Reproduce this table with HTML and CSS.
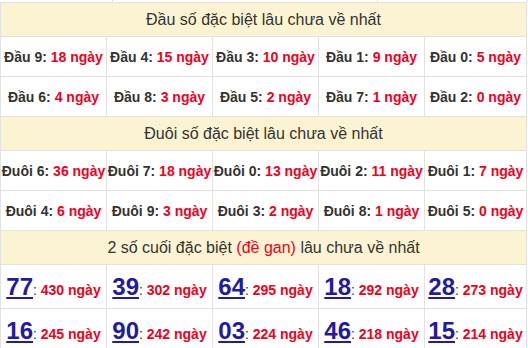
FILE: index.html
```html
<!DOCTYPE html>
<html lang="vi">
<head>
<meta charset="utf-8">
<title>Thống kê giải đặc biệt</title>
<link rel="stylesheet" href="styles.css">
</head>
<body>
<div class="prev">
  <div class="prev-cell c1"></div>
  <div class="prev-cell c2"></div>
  <div class="prev-cell c3"></div>
</div>
<div class="board">
  <div class="head"><span>Đầu số đặc biệt lâu chưa về nhất</span></div>
  <div class="row">
    <div class="cell"><span><b>Đầu 9:</b> <span class="red">18 ngày</span></span></div>
    <div class="cell"><span><b>Đầu 4:</b> <span class="red">15 ngày</span></span></div>
    <div class="cell"><span><b>Đầu 3:</b> <span class="red">10 ngày</span></span></div>
    <div class="cell"><span><b>Đầu 1:</b> <span class="red">9 ngày</span></span></div>
    <div class="cell"><span><b>Đầu 0:</b> <span class="red">5 ngày</span></span></div>
  </div>
  <div class="row">
    <div class="cell"><span><b>Đầu 6:</b> <span class="red">4 ngày</span></span></div>
    <div class="cell"><span><b>Đầu 8:</b> <span class="red">3 ngày</span></span></div>
    <div class="cell"><span><b>Đầu 5:</b> <span class="red">2 ngày</span></span></div>
    <div class="cell"><span><b>Đầu 7:</b> <span class="red">1 ngày</span></span></div>
    <div class="cell"><span><b>Đầu 2:</b> <span class="red">0 ngày</span></span></div>
  </div>
  <div class="head"><span>Đuôi số đặc biệt lâu chưa về nhất</span></div>
  <div class="row">
    <div class="cell"><span><b>Đuôi 6:</b> <span class="red">36 ngày</span></span></div>
    <div class="cell"><span><b>Đuôi 7:</b> <span class="red">18 ngày</span></span></div>
    <div class="cell"><span><b>Đuôi 0:</b> <span class="red">13 ngày</span></span></div>
    <div class="cell"><span><b>Đuôi 2:</b> <span class="red">11 ngày</span></span></div>
    <div class="cell"><span><b>Đuôi 1:</b> <span class="red">7 ngày</span></span></div>
  </div>
  <div class="row">
    <div class="cell"><span><b>Đuôi 4:</b> <span class="red">6 ngày</span></span></div>
    <div class="cell"><span><b>Đuôi 9:</b> <span class="red">3 ngày</span></span></div>
    <div class="cell"><span><b>Đuôi 3:</b> <span class="red">2 ngày</span></span></div>
    <div class="cell"><span><b>Đuôi 8:</b> <span class="red">1 ngày</span></span></div>
    <div class="cell"><span><b>Đuôi 5:</b> <span class="red">0 ngày</span></span></div>
  </div>
  <div class="head"><span>2 số cuối đặc biệt <span class="gan">(đề gan)</span> lâu chưa về nhất</span></div>
  <div class="row big">
    <div class="cell"><span><a class="num">77</a><b class="colon">:</b> <span class="red">430 ngày</span></span></div>
    <div class="cell"><span><a class="num">39</a><b class="colon">:</b> <span class="red">302 ngày</span></span></div>
    <div class="cell"><span><a class="num">64</a><b class="colon">:</b> <span class="red">295 ngày</span></span></div>
    <div class="cell"><span><a class="num">18</a><b class="colon">:</b> <span class="red">292 ngày</span></span></div>
    <div class="cell"><span><a class="num">28</a><b class="colon">:</b> <span class="red">273 ngày</span></span></div>
  </div>
  <div class="row big">
    <div class="cell"><span><a class="num">16</a><b class="colon">:</b> <span class="red">245 ngày</span></span></div>
    <div class="cell"><span><a class="num">90</a><b class="colon">:</b> <span class="red">242 ngày</span></span></div>
    <div class="cell"><span><a class="num">03</a><b class="colon">:</b> <span class="red">224 ngày</span></span></div>
    <div class="cell"><span><a class="num">46</a><b class="colon">:</b> <span class="red">218 ngày</span></span></div>
    <div class="cell"><span><a class="num">15</a><b class="colon">:</b> <span class="red">214 ngày</span></span></div>
  </div>
</div>
</body>
</html>
```
FILE: styles.css
```css
html, body {
  margin: 0;
  padding: 0;
  background: #fff;
}
body {
  font-family: "Liberation Sans", Arial, sans-serif;
  color: #333;
  width: 528px;
  height: 348px;
  overflow: hidden;
}
.prev {
  display: flex;
  height: 2px;
}
.prev-cell {
  border-right: 1px solid #e2e2e2;
}
.prev-cell.c1 { width: 112px; }
.prev-cell.c2 { width: 264px; }
.prev-cell.c3 { width: 149px; }

.board {
  width: 525px;
  border: 1px solid #e2e2e2;
  border-bottom: none;
  background: #e2e2e2;
  display: grid;
  gap: 1px;
}
.head {
  height: 33px;
  background: #fcf3d2;
  display: flex;
  align-items: center;
  justify-content: center;
  font-size: 16px;
  color: #333;
}
.gan { color: #f0001c; }
.row {
  display: grid;
  grid-template-columns: 105px 105px 105px 105px 101px;
  gap: 1px;
  height: 39px;
}
.row.big { height: 43px; }
.cell {
  background: #fff;
  display: flex;
  align-items: center;
  justify-content: center;
  white-space: nowrap;
  font-size: 14px;
  font-weight: bold;
  color: #333;
}
.red { color: #f0001c; }
.num {
  font-size: 24px;
  font-weight: bold;
  color: #221aa0;
  text-decoration: underline;
  text-decoration-thickness: 2px;
  text-underline-offset: 2px;
}
.colon {
  font-size: 14px;
  font-weight: normal;
  color: #333;
}
.big .red { font-size: 14px; }
```
